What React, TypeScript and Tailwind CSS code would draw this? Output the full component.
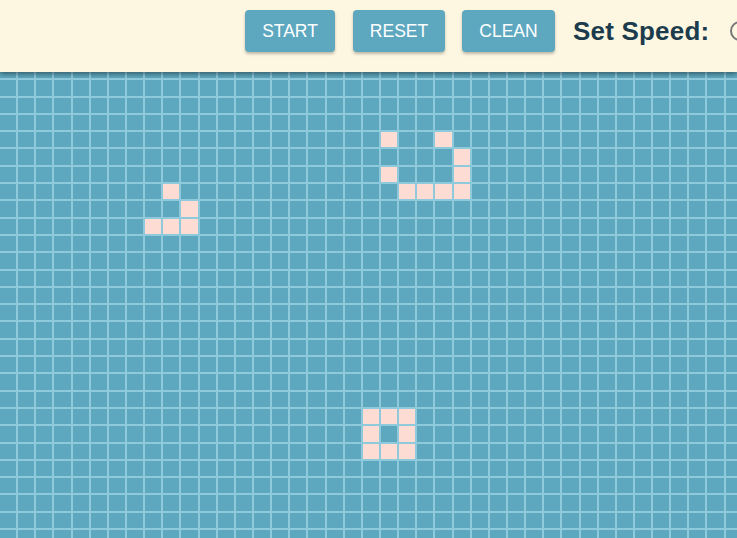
import React from 'react';

const COLS = 41;
const ROWS = 28;

// live cells as "col,row"
const alive = new Set<string>([
  // glider
  '9,7', '10,8', '8,9', '9,9', '10,9',
  // spaceship
  '21,4', '24,4', '25,5', '21,6', '25,6', '22,7', '23,7', '24,7', '25,7',
  // ring
  '20,20', '21,20', '22,20', '20,21', '22,21', '20,22', '21,22', '22,22',
]);

const Header: React.FC = () => {
  const btn =
    'h-[42px] px-[18px] rounded-[4px] bg-[#5ea8bf] text-white text-[17.5px] shadow-[0_2px_3px_rgba(0,0,0,0.25)] flex items-center justify-center';
  return (
    <div className="relative z-10 h-[72px] pb-[10px] bg-[#fdf7e2] shadow-[0_2px_5px_rgba(0,0,0,0.45)] flex items-center pl-[245px] overflow-hidden whitespace-nowrap">
      <button className={`${btn} w-[90px]`}>START</button>
      <button className={`${btn} w-[92px] ml-[18px]`}>RESET</button>
      <button className={`${btn} w-[93px] ml-[17px]`}>CLEAN</button>
      <span className="ml-[18px] text-[26px] font-bold text-[#1c3b4c] tracking-[0.2px]">Set Speed:</span>
      <span className="ml-[21px] shrink-0 w-[20px] h-[20px] rounded-full border-2 border-[#777777]" />
    </div>
  );
};

const Board: React.FC = () => {
  const cells = [];
  for (let r = 0; r < ROWS; r++) {
    for (let c = 0; c < COLS; c++) {
      const live = alive.has(`${c},${r}`);
      cells.push(
        <div
          key={`${c}-${r}`}
          className={live ? 'border border-[#8fcadc] bg-[#fddcd3]' : 'border border-[#8fcadc] bg-[#5ea8bf]'}
        />
      );
    }
  }
  return (
    <div className="-mt-[10px] -ml-px grid grid-cols-[repeat(41,18.15px)] auto-rows-[17.3px] bg-[#8fcadc]">
      {cells}
    </div>
  );
};

export default function App() {
  return (
    <div className="w-[737px] h-[538px] overflow-hidden bg-[#5ea8bf] font-['Liberation_Sans',Arial,sans-serif]">
      <Header />
      <Board />
    </div>
  );
}
